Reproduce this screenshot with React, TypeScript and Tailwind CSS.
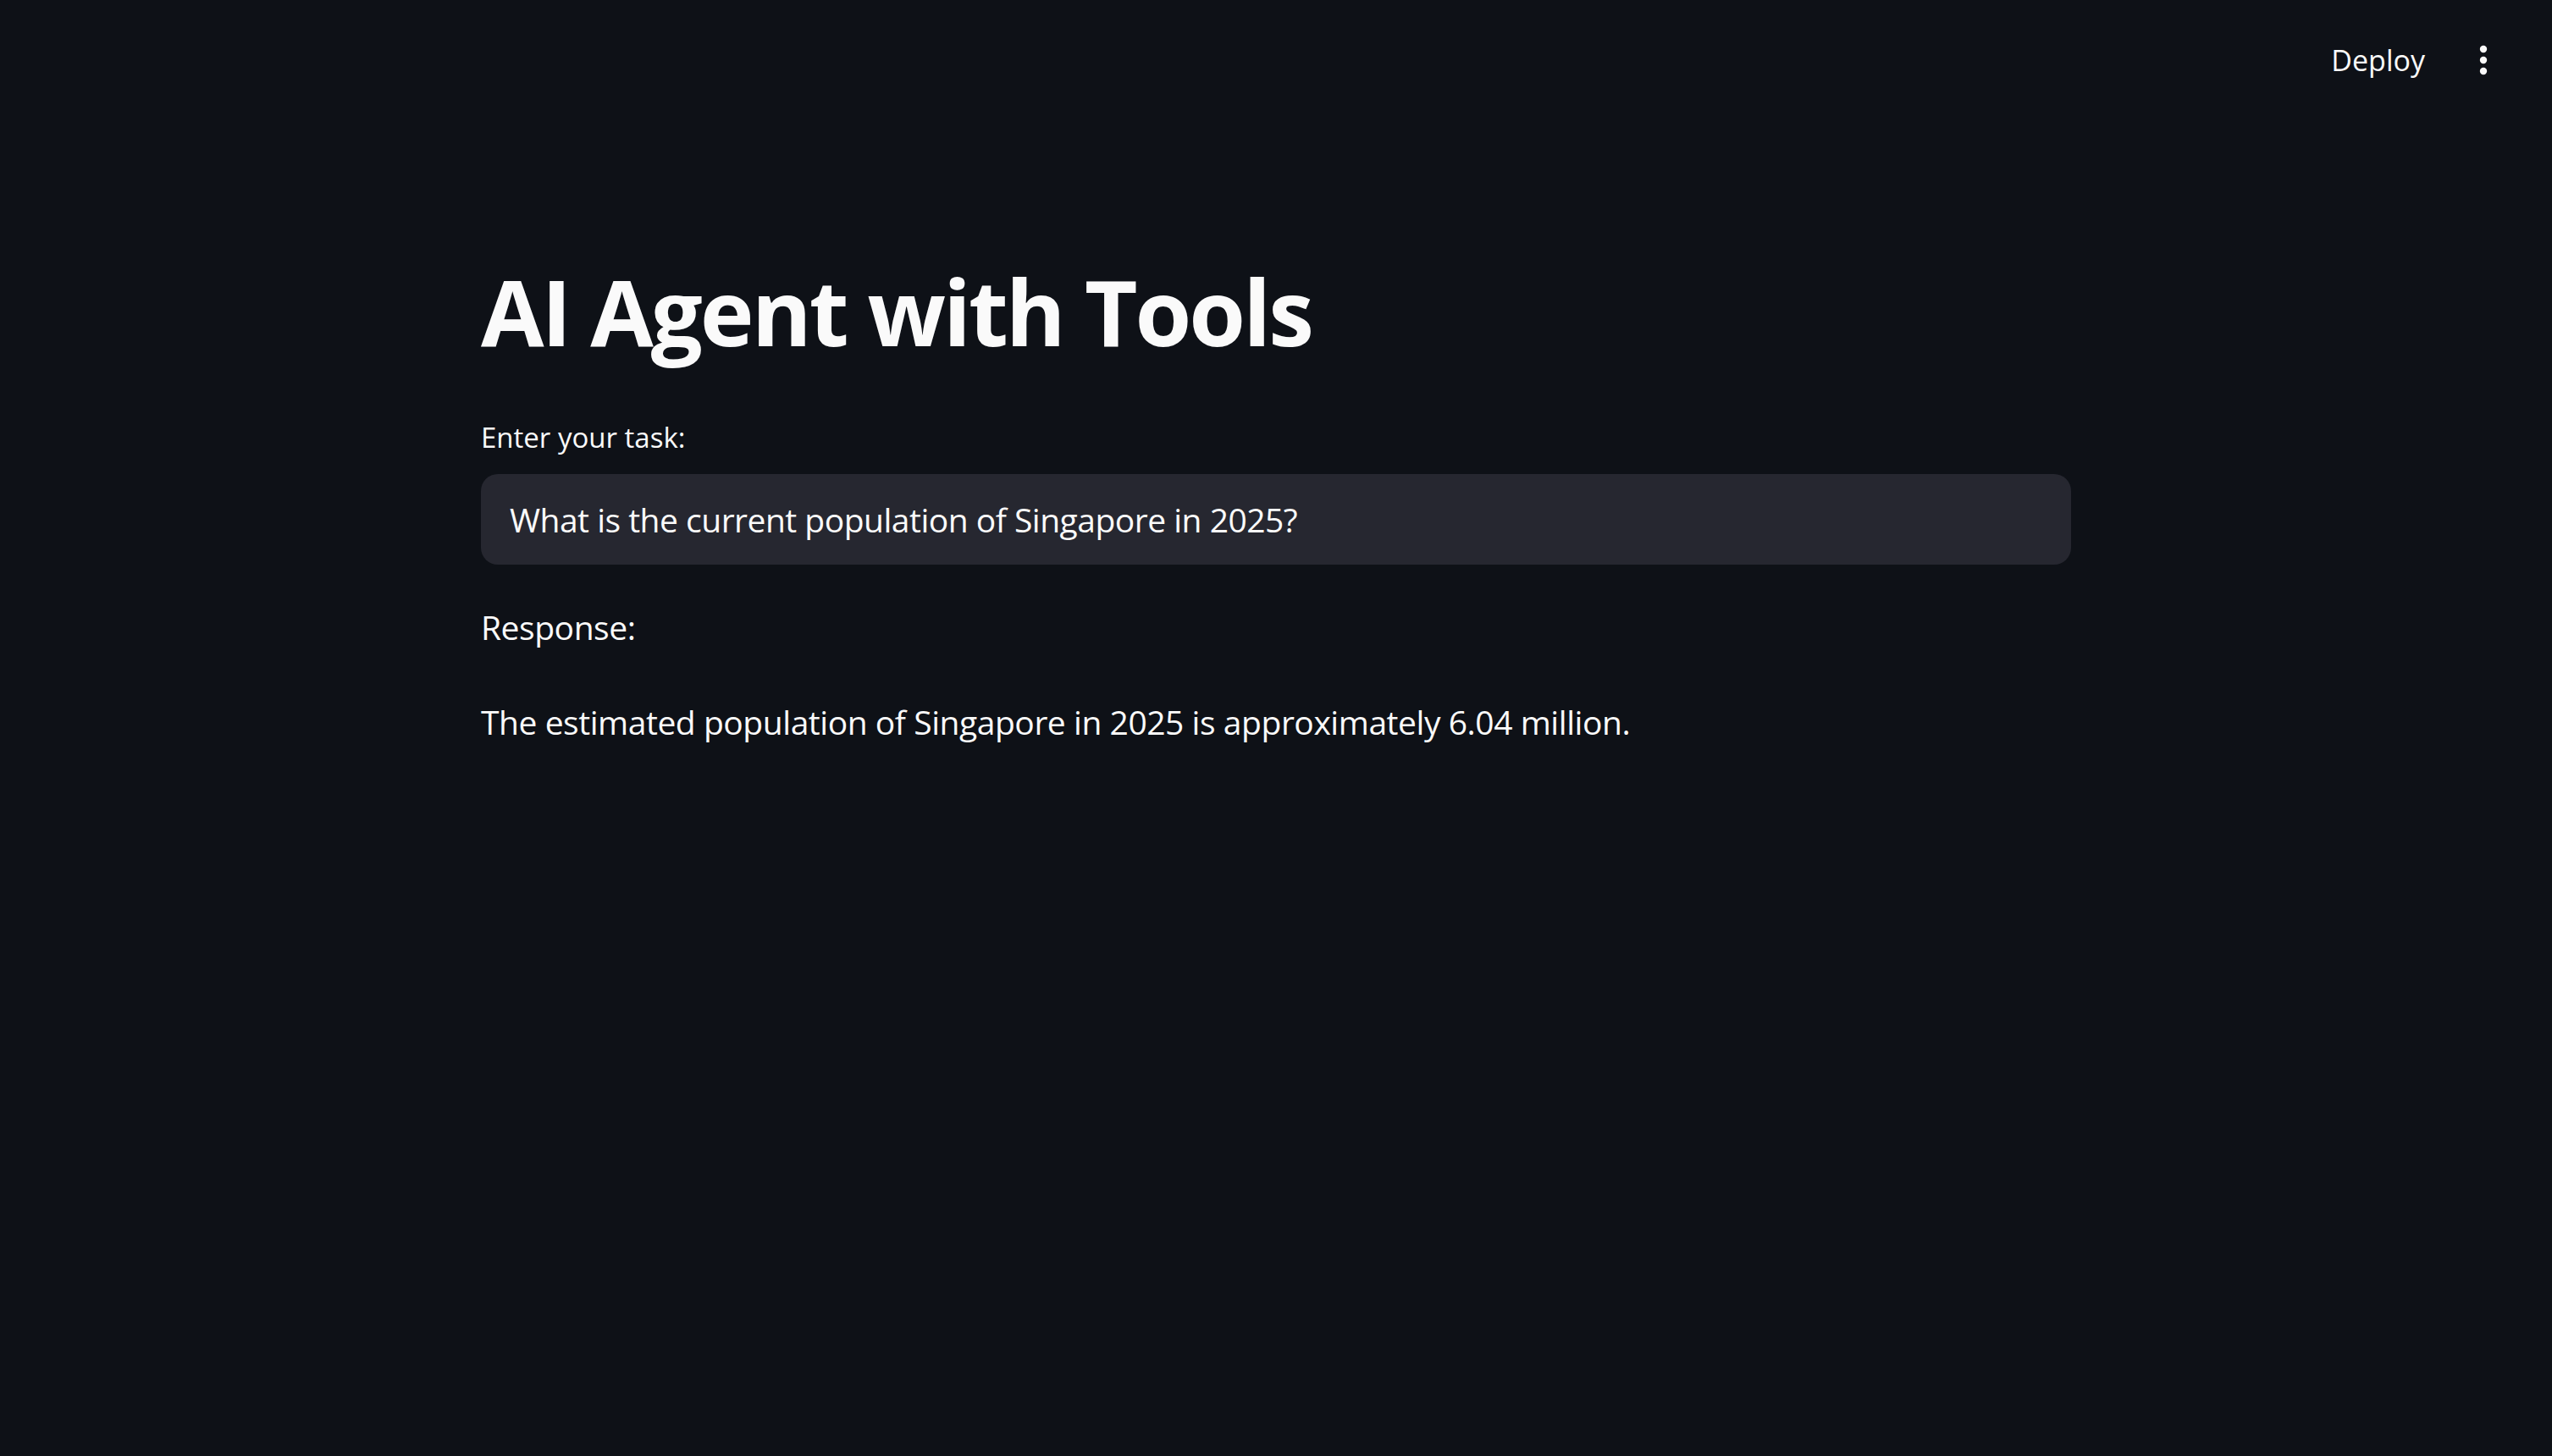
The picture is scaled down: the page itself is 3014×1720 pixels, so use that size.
import React from "react";

const KebabIcon = () => (
  <svg width="10" height="36" viewBox="0 0 10 36" fill="#fafafa">
    <circle cx="5" cy="5" r="4.2" />
    <circle cx="5" cy="18" r="4.2" />
    <circle cx="5" cy="31" r="4.2" />
  </svg>
);

export default function App() {
  return (
    <div className="min-h-screen bg-[#0e1117] text-[#fafafa] font-['Open_Sans',sans-serif]">
      <header className="h-[142px] flex items-center justify-end pr-[76px] gap-[64px]">
        <button className="text-[34px] leading-[44px]">Deploy</button>
        <button className="flex items-center">
          <KebabIcon />
        </button>
      </header>

      <main className="w-[1878px] mx-auto pt-[161px]">
        <h1 className="text-[108px] leading-[130px] font-bold tracking-[-3px]">AI Agent with Tools</h1>

        <label className="block mt-[63px] text-[33px] leading-[42px]">Enter your task:</label>
        <div className="mt-[22px] h-[107px] rounded-[20px] bg-[#262730] pl-[34px] flex items-center">
          <p className="text-[39px] leading-[52px] tracking-[-0.5px]">What is the current population of Singapore in 2025?</p>
        </div>

        <p className="mt-[48px] text-[39px] leading-[52px] tracking-[-0.45px]">Response:</p>
        <p className="mt-[60px] text-[39px] leading-[52px] tracking-[-0.45px]">
          The estimated population of Singapore in 2025 is approximately 6.04 million.
        </p>
      </main>
    </div>
  );
}
